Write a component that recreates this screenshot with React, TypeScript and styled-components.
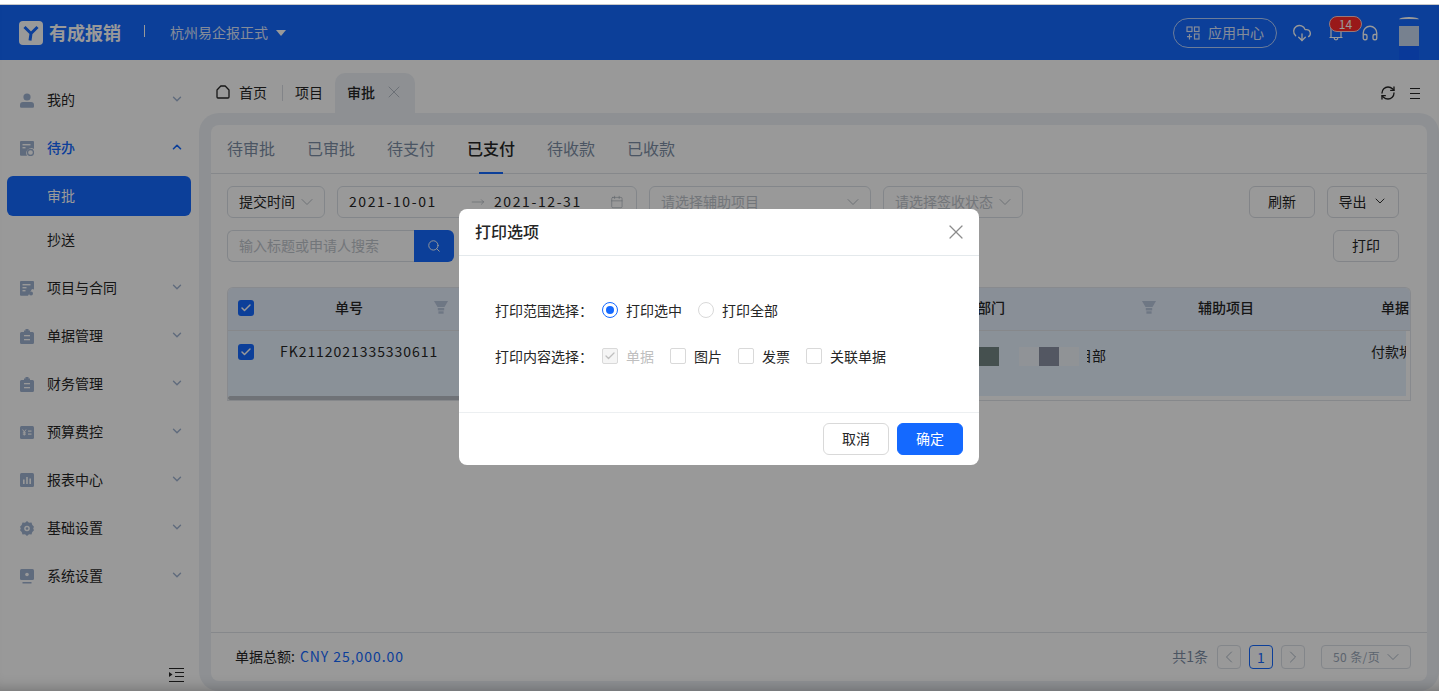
import { ChevronDown, ChevronLeft, ChevronRight, ChevronUp, CloudDownload, Headphones, RefreshCw, Search, X, Calendar, MoveRight, Check } from "lucide-react";
import styled, { createGlobalStyle } from "styled-components";

const GlobalStyle = createGlobalStyle`
  html, body {
    margin: 0;
    padding: 0;
    height: 100%;
    overflow: hidden;
    background: #fff;
    font-family: "Noto Sans CJK SC", "Noto Sans", sans-serif;
    font-size: 14px;
    color: #262626;
  }
  * {
    box-sizing: border-box;
  }
`;

const BLUE = "#1469ff";
const ICON = "#9fb2d0";

type IconName = "user" | "todo" | "project" | "clip" | "budget" | "chart" | "gear" | "screen";

function MenuIcon({ name }: { name: IconName }) {
  const fill = ICON;
  switch (name) {
    case "user":
      return (
        <svg width="14" height="15" viewBox="0 0 14 15">
          <circle cx="7" cy="4" r="3.6" fill={fill} />
          <path d="M0 12a3 3 0 0 1 3-3h8a3 3 0 0 1 3 3v1.5a1.2 1.2 0 0 1-1.2 1.2H1.2A1.2 1.2 0 0 1 0 13.5z" fill={fill} />
        </svg>
      );
    case "todo":
      return (
        <svg width="14" height="15" viewBox="0 0 14 15">
          <path d="M1 0h12a1 1 0 0 1 1 1v7a5 5 0 0 0-7 6.8H1a1 1 0 0 1-1-1V1a1 1 0 0 1 1-1z" fill={fill} />
          <rect x="2.5" y="3" width="8" height="1.4" fill="#fff" />
          <rect x="2.5" y="6" width="3" height="1.4" fill="#fff" />
          <circle cx="10.5" cy="11.5" r="3" fill="none" stroke={fill} strokeWidth="1.3" />
        </svg>
      );
    case "project":
      return (
        <svg width="14" height="15" viewBox="0 0 14 15">
          <path d="M1 0h12a1 1 0 0 1 1 1v7.5L12 8l-4 6.8H1a1 1 0 0 1-1-1V1a1 1 0 0 1 1-1z" fill={fill} />
          <rect x="2.5" y="3" width="8" height="1.4" fill="#fff" />
          <rect x="2.5" y="6" width="4" height="1.4" fill="#fff" />
          <rect x="2.5" y="9" width="3" height="1.4" fill="#fff" />
          <circle cx="11" cy="12.5" r="2" fill={fill} />
        </svg>
      );
    case "clip":
      return (
        <svg width="14" height="15" viewBox="0 0 14 15">
          <path d="M4 1.5h1.5V0h3v1.5H10V3h2.5A1.5 1.5 0 0 1 14 4.5v9a1.5 1.5 0 0 1-1.5 1.5h-11A1.5 1.5 0 0 1 0 13.5v-9A1.5 1.5 0 0 1 1.5 3H4z" fill={fill} />
          <rect x="4" y="6" width="6" height="1.3" fill="#fff" />
          <rect x="4" y="10" width="6" height="1.3" fill="#fff" />
        </svg>
      );
    case "budget":
      return (
        <svg width="14" height="13" viewBox="0 0 14 13">
          <rect width="14" height="13" rx="1.5" fill={fill} />
          <path d="M2.6 3.5l1.7 2.5 1.7-2.5M4.3 6v3.5M2.8 6.8h3M2.8 8.2h3" stroke="#fff" strokeWidth="1" fill="none" />
          <rect x="8" y="4.5" width="3.5" height="1.2" fill="#fff" />
          <rect x="8" y="7.5" width="3.5" height="1.2" fill="#fff" />
        </svg>
      );
    case "chart":
      return (
        <svg width="14" height="14" viewBox="0 0 14 14">
          <rect width="14" height="14" rx="1.5" fill={fill} />
          <rect x="3" y="6.5" width="1.6" height="4.5" fill="#fff" />
          <rect x="6.2" y="4" width="1.6" height="7" fill="#fff" />
          <rect x="9.4" y="5.5" width="1.6" height="5.5" fill="#fff" />
        </svg>
      );
    case "gear":
      return (
        <svg width="14" height="15" viewBox="0 0 14 15">
          <path d="M7 0l2 1.7 2.5-.2.8 2.4L14 5.7 13.2 7.5 14 9.3l-1.700 1.800-.8 2.400-2.500-.2L7 15l-2-1.700-2.500.2-.8-2.400L0 9.300.8 7.500 0 5.700l1.700-1.800.8-2.400 2.500.2z" fill={fill} />
          <circle cx="7" cy="7.5" r="2.8" fill="#fff" />
          <circle cx="7" cy="7.5" r="1.3" fill={fill} />
        </svg>
      );
    case "screen":
      return (
        <svg width="14" height="15" viewBox="0 0 14 15">
          <rect width="14" height="11" rx="1.5" fill={fill} />
          <circle cx="7" cy="5.5" r="1.8" fill="#fff" />
          <rect x="2.5" y="13" width="9" height="1.5" fill={fill} />
        </svg>
      );
  }
}

function FunnelIcon() {
  return (
    <svg width="14" height="13" viewBox="0 0 14 13">
      <path d="M0 0h14l-3.500 6h-7z" fill="#b8c6dc" />
      <rect x="3.8" y="7" width="6.4" height="2.4" fill="#b8c6dc" />
      <rect x="4.4" y="10.3" width="5.2" height="2.4" fill="#b8c6dc" />
    </svg>
  );
}

const menuItems: { label: string; icon: IconName }[] = [
  { label: "项目与合同", icon: "project" },
  { label: "单据管理", icon: "clip" },
  { label: "财务管理", icon: "clip" },
  { label: "预算费控", icon: "budget" },
  { label: "报表中心", icon: "chart" },
  { label: "基础设置", icon: "gear" },
  { label: "系统设置", icon: "screen" },
];

const mosaic = ["#748684", "#e6f2fd", "#f0f6fc", "#8a92a3", "#f0f5fb"];

export default function App() {
  return (
    <>
      <GlobalStyle />
      <Shell>
        <TopBar>
          <Brand>
            <Logo>
              <svg width="24" height="24" viewBox="0 0 24 24">
                <path d="M5.500 6 12 12.500 18.500 6M12 12.500 11 19.500" stroke={BLUE} strokeWidth="3" fill="none" />
              </svg>
            </Logo>
            <BrandName>有成报销</BrandName>
            <BrandDivider />
            <CompanyName>杭州易企报正式</CompanyName>
            <Caret />
          </Brand>
          <TopActions>
            <AppCenter>
              <svg width="14" height="14" viewBox="0 0 14 14" fill="none" stroke="currentColor" strokeWidth="1.2">
                <rect x="1" y="1" width="5" height="4.5" />
                <rect x="8.5" y="1" width="4.5" height="4.5" />
                <rect x="8.5" y="8" width="4.5" height="5" />
                <path d="M3.5 8v5.500M1 10.700h5" />
              </svg>
              <AppCenterLabel>应用中心</AppCenterLabel>
            </AppCenter>
            <CloudDownload size={20} strokeWidth={1.6} />
            <BellWrap>
              <svg width="14" height="14" viewBox="0 0 14 14" fill="none" stroke="currentColor" strokeWidth="1.2">
                <path d="M2 0v10.500M12 0v10.500M.5 10.500h13M5.200 11a1.800 1.800 0 0 0 3.600 0" />
              </svg>
              <Badge>14</Badge>
            </BellWrap>
            <HeadsetSlot>
              <Headphones size={18} strokeWidth={1.8} />
            </HeadsetSlot>
            <Avatar>
              <AvatarArc />
              <AvatarFace />
              <AvatarNeck />
            </Avatar>
          </TopActions>
        </TopBar>
        <Body>
          <Sidebar>
            <MenuRow>
              <MenuIcon name="user" />
              <MenuLabel>我的</MenuLabel>
              <ChevronDown size={14} strokeWidth={2.4} color={ICON} />
            </MenuRow>
            <MenuRow>
              <MenuIcon name="todo" />
              <MenuLabel $active>待办</MenuLabel>
              <ChevronUp size={14} strokeWidth={2.8} color={BLUE} />
            </MenuRow>
            <SubItem $active $first>
              审批
            </SubItem>
            <SubItem>抄送</SubItem>
            {menuItems.map((item) => (
              <MenuRow key={item.label}>
                <MenuIcon name={item.icon} />
                <MenuLabel>{item.label}</MenuLabel>
                <ChevronDown size={14} strokeWidth={2.4} color={ICON} />
              </MenuRow>
            ))}
            <CollapseButton>
              <svg width="15" height="14" viewBox="0 0 15 14" fill="none" stroke="#262626" strokeWidth="1">
                <path d="M0 .5h15M6 4.500h9M6 8.500h9M0 13.500h15" />
                <path d="M0 4l3.500 2.500L0 9z" fill="#262626" stroke="none" />
              </svg>
            </CollapseButton>
          </Sidebar>
          <Main>
            <PageTabs>
              <PageTab>
                <svg width="14" height="14" viewBox="0 0 14 14" fill="none" stroke="#262626" strokeWidth="1.3">
                  <path d="M1 5 4.800 1h4.400L13 5v7a1 1 0 0 1-1 1H2a1 1 0 0 1-1-1z" strokeLinejoin="round" />
                </svg>
                首页
              </PageTab>
              <TabDivider />
              <PageTab>项目</PageTab>
              <ActivePageTab>
                审批
                <X size={20} strokeWidth={1} color="#a8b0bb" />
              </ActivePageTab>
              <TabTools>
                <RefreshCw size={16} strokeWidth={2} />
                <svg width="10" height="11" viewBox="0 0 10 11" stroke="#262626" strokeWidth="1">
                  <path d="M0 .5h10M0 5.500h10M0 10.500h10" />
                </svg>
              </TabTools>
            </PageTabs>
            <Frame>
              <Card>
                <StatusTabs>
                  <StatusTab>待审批</StatusTab>
                  <StatusTab>已审批</StatusTab>
                  <StatusTab>待支付</StatusTab>
                  <StatusTab $active>已支付</StatusTab>
                  <StatusTab>待收款</StatusTab>
                  <StatusTab>已收款</StatusTab>
                </StatusTabs>
                <Toolbar>
                  <ToolRow>
                    <Select $width={98}>
                      <span>提交时间</span>
                      <ChevronDown size={20} strokeWidth={1} color="#a9b1ba" />
                    </Select>
                    <DateRange>
                      <DateText>2021-10-01</DateText>
                      <MoveRight size={14} strokeWidth={1} color="#9aa3ad" />
                      <DateText>2021-12-31</DateText>
                      <Calendar size={14} strokeWidth={1} color="#9aa3ad" />
                    </DateRange>
                    <Select $width={222} $placeholder>
                      <span>请选择辅助项目</span>
                      <ChevronDown size={20} strokeWidth={1} color="#a9b1ba" />
                    </Select>
                    <Select $width={140} $placeholder>
                      <span>请选择签收状态</span>
                      <ChevronDown size={20} strokeWidth={1} color="#a9b1ba" />
                    </Select>
                    <ToolSpacer />
                    <OutlineButton $width={66}>刷新</OutlineButton>
                    <OutlineButton $width={72}>
                      导出
                      <ChevronDown size={16} strokeWidth={1.4} />
                    </OutlineButton>
                  </ToolRow>
                  <ToolRow>
                    <SearchBox>
                      <SearchInput>输入标题或申请人搜索</SearchInput>
                      <SearchButton>
                        <Search size={14} strokeWidth={1.6} color="#fff" />
                      </SearchButton>
                    </SearchBox>
                    <ToolSpacer />
                    <OutlineButton $width={66}>打印</OutlineButton>
                  </ToolRow>
                </Toolbar>
                <Table>
                  <HeadRow>
                    <CheckCell>
                      <BlueCheck>
                        <Check size={12} strokeWidth={3} color="#fff" />
                      </BlueCheck>
                    </CheckCell>
                    <NumberHead>
                      单号
                      <FunnelSlot>
                        <FunnelIcon />
                      </FunnelSlot>
                    </NumberHead>
                    <MiddleCell />
                    <DeptHead>
                      部门
                      <FunnelSlot>
                        <FunnelIcon />
                      </FunnelSlot>
                    </DeptHead>
                    <AuxHead>辅助项目</AuxHead>
                    <TypeHead>单据</TypeHead>
                  </HeadRow>
                  <DataRow>
                    <RowCheckCell>
                      <BlueCheck>
                        <Check size={12} strokeWidth={3} color="#fff" />
                      </BlueCheck>
                    </RowCheckCell>
                    <NumberCell>FK2112021335330611</NumberCell>
                    <MiddleCell />
                    <DeptCell>
                      {mosaic.map((tone, i) => (
                        <MosaicTile key={i} $tone={tone} />
                      ))}
                      <DeptTail>目部</DeptTail>
                    </DeptCell>
                    <AuxCell />
                    <TypeCell>付款坍</TypeCell>
                  </DataRow>
                  <HScrollBar />
                </Table>
                <CardSpacer />
                <FooterBar>
                  <Total>
                    单据总额:
                    <TotalValue>CNY 25,000.00</TotalValue>
                  </Total>
                  <Pager>
                    <PagerTotal>共1条</PagerTotal>
                    <PageButton>
                      <ChevronLeft size={20} strokeWidth={1} />
                    </PageButton>
                    <PageButton $current>1</PageButton>
                    <PageButton>
                      <ChevronRight size={20} strokeWidth={1} />
                    </PageButton>
                    <PageSize>
                      <span>50 条/页</span>
                      <ChevronDown size={20} strokeWidth={1} />
                    </PageSize>
                  </Pager>
                </FooterBar>
              </Card>
            </Frame>
          </Main>
        </Body>
        <Mask>
          <Modal>
            <ModalHeader>
              <ModalTitle>打印选项</ModalTitle>
              <X size={24} strokeWidth={1.2} color="#8c8c8c" />
            </ModalHeader>
            <ModalBody>
              <FormRow>
                <FormLabel>打印范围选择：</FormLabel>
                <Radio $checked />
                <OptionText>打印选中</OptionText>
                <Radio />
                <OptionText>打印全部</OptionText>
              </FormRow>
              <FormRow>
                <FormLabel>打印内容选择：</FormLabel>
                <CheckOption $disabled>
                  <CheckBox $disabled>
                    <Check size={12} strokeWidth={2.6} color="#bfbfbf" />
                  </CheckBox>
                  单据
                </CheckOption>
                <CheckOption>
                  <CheckBox />
                  图片
                </CheckOption>
                <CheckOption>
                  <CheckBox />
                  发票
                </CheckOption>
                <CheckOption>
                  <CheckBox />
                  关联单据
                </CheckOption>
              </FormRow>
            </ModalBody>
            <ModalFooter>
              <ModalButton>取消</ModalButton>
              <ModalButton $primary>确定</ModalButton>
            </ModalFooter>
          </Modal>
        </Mask>
      </Shell>
    </>
  );
}

const Shell = styled.div`
  position: relative;
  margin-top: 4px;
  height: 687px;
  display: flex;
  flex-direction: column;
  border-top: 1px solid #c8c8c8;
  background: #fff;
  overflow: hidden;
`;

const TopBar = styled.header`
  height: 55px;
  flex-shrink: 0;
  background: ${BLUE};
  display: flex;
  align-items: center;
  justify-content: space-between;
  padding: 0 19px;
  color: #fff;
`;

const Brand = styled.div`
  display: flex;
  align-items: center;
`;

const Logo = styled.div`
  width: 24px;
  height: 24px;
  background: #fff;
  border-radius: 4px;
`;

const BrandName = styled.div`
  margin: 0 0 2px 6px;
  font-size: 18px;
  font-weight: 700;
`;

const BrandDivider = styled.div`
  width: 1px;
  height: 12px;
  background: #fff;
  margin: 0 25px 4px 23px;
`;

const CompanyName = styled.div`
  font-size: 14px;
  margin-bottom: 2px;
  opacity: 0.85;
`;

const Caret = styled.div`
  margin-left: 8px;
  border-left: 5px solid transparent;
  border-right: 5px solid transparent;
  border-top: 6px solid #fff;
`;

const TopActions = styled.div`
  display: flex;
  align-items: center;
`;

const AppCenter = styled.div`
  width: 104px;
  height: 30px;
  border: 1px solid rgba(255, 255, 255, 0.8);
  border-radius: 15px;
  display: flex;
  align-items: center;
  justify-content: center;
  gap: 8px;
  margin-right: 15px;
  opacity: 0.85;
`;

const AppCenterLabel = styled.span`
  margin-bottom: 2px;
`;

const BellWrap = styled.div`
  position: relative;
  margin: 3px 0 0 17px;
  width: 14px;
  height: 14px;
  display: flex;
`;

const Badge = styled.div`
  position: absolute;
  left: 0;
  top: -11px;
  width: 33px;
  height: 16px;
  border-radius: 8px;
  background: #ff2a2a;
  border: 1px solid #ffc9c9;
  font-size: 12px;
  line-height: 13px;
  text-align: center;
`;

const HeadsetSlot = styled.div`
  position: relative;
  margin-left: 18px;
  display: flex;
`;

const Avatar = styled.div`
  margin-left: 19px;
  width: 22px;
  height: 55px;
  display: flex;
  flex-direction: column;
  align-items: center;
  padding-top: 12px;
`;

const AvatarArc = styled.div`
  width: 20px;
  height: 5px;
  border-top: 2px solid #fff;
  border-radius: 50% 50% 0 0;
  margin-bottom: 4px;
`;

const AvatarFace = styled.div`
  width: 20px;
  height: 20px;
  background: #c7d7ee;
`;

const AvatarNeck = styled.div`
  width: 20px;
  flex: 1;
  background: #0f5fff;
`;

const Body = styled.div`
  flex: 1;
  min-height: 0;
  display: flex;
`;

const Sidebar = styled.aside`
  position: relative;
  width: 199px;
  flex-shrink: 0;
  padding: 16px 8px 0 8px;
`;

const MenuRow = styled.div`
  height: 48px;
  display: flex;
  align-items: center;
  padding: 0 7px 0 12px;
  & > svg:first-child {
    width: 14px;
    flex-shrink: 0;
  }
  & > svg:last-child {
    margin-bottom: 2px;
  }
`;

const MenuLabel = styled.div<{ $active?: boolean }>`
  flex: 1;
  margin: 0 0 2px 13px;
  font-weight: ${(p) => (p.$active ? 500 : 400)};
  color: ${(p) => (p.$active ? BLUE : "#262626")};
`;

const SubItem = styled.div<{ $active?: boolean; $first?: boolean }>`
  height: 40px;
  margin: ${(p) => (p.$first ? "4px" : "0")} 0 4px -1px;
  border-radius: 6px;
  display: flex;
  align-items: center;
  padding: 0 0 2px 40px;
  background: ${(p) => (p.$active ? BLUE : "transparent")};
  color: ${(p) => (p.$active ? "#fff" : "#262626")};
`;

const CollapseButton = styled.div`
  position: absolute;
  left: 169px;
  bottom: 9px;
  display: flex;
`;

const Main = styled.main`
  flex: 1;
  min-width: 0;
  display: flex;
  flex-direction: column;
`;

const PageTabs = styled.div`
  height: 53px;
  flex-shrink: 0;
  display: flex;
  align-items: flex-end;
  padding-left: 17px;
`;

const PageTab = styled.div`
  height: 40px;
  display: flex;
  align-items: center;
  gap: 9px;
  padding-bottom: 3px;
`;

const TabDivider = styled.div`
  width: 1px;
  height: 16px;
  background: #d9dde3;
  margin: 0 12px 12px 15px;
`;

const ActivePageTab = styled(PageTab)`
  width: 80px;
  margin-left: 12px;
  padding-left: 12px;
  gap: 9px;
  background: #edf1f6;
  border-radius: 10px 10px 0 0;
  font-weight: 500;
`;

const TabTools = styled.div`
  margin-left: auto;
  height: 40px;
  display: flex;
  align-items: center;
  gap: 14px;
  padding: 0 19px 0 0;
`;

const Frame = styled.div`
  flex: 1;
  min-height: 0;
  background: #edf1f6;
  border-radius: 20px;
  padding: 12px 12px 10px;
`;

const Card = styled.div`
  height: 100%;
  background: #fff;
  border-radius: 8px;
  display: flex;
  flex-direction: column;
  overflow: hidden;
`;

const StatusTabs = styled.div`
  height: 49px;
  flex-shrink: 0;
  display: flex;
  gap: 32px;
  padding-left: 16px;
  border-bottom: 1px solid #dfe3e8;
`;

const StatusTab = styled.div<{ $active?: boolean }>`
  position: relative;
  font-size: 16px;
  line-height: 46px;
  height: 48px;
  font-weight: ${(p) => (p.$active ? 500 : 400)};
  color: ${(p) => (p.$active ? "#262626" : "#7d8ea6")};
  ${(p) =>
    p.$active &&
    `
    &::after {
      content: "";
      position: absolute;
      left: 12px;
      right: 12px;
      bottom: -1px;
      height: 2px;
      background: ${BLUE};
    }
  `}
`;

const Toolbar = styled.div`
  padding: 12px 28px 0 16px;
  display: flex;
  flex-direction: column;
  gap: 12px;
`;

const ToolRow = styled.div`
  display: flex;
  height: 32px;
  gap: 12px;
`;

const ToolSpacer = styled.div`
  flex: 1;
`;

const Select = styled.div<{ $width: number; $placeholder?: boolean }>`
  width: ${(p) => p.$width}px;
  height: 32px;
  border: 1px solid #dbe0e6;
  border-radius: 6px;
  display: flex;
  align-items: center;
  justify-content: space-between;
  padding: 0 7px 0 11px;
  color: ${(p) => (p.$placeholder ? "#bfc5cc" : "#262626")};
  & > span {
    margin-bottom: 2px;
  }
`;

const DateRange = styled.div`
  width: 300px;
  height: 32px;
  border: 1px solid #dbe0e6;
  border-radius: 6px;
  display: flex;
  align-items: center;
  padding: 0 12px 0 11px;
`;

const DateText = styled.div`
  margin-bottom: 2px;
  letter-spacing: 1.6px;
  width: 124px;
  &:nth-of-type(2) {
    width: 118px;
    margin-left: 9px;
  }
`;

const OutlineButton = styled.div<{ $width: number }>`
  width: ${(p) => p.$width}px;
  height: 32px;
  border: 1px solid #d9dde3;
  border-radius: 6px;
  display: flex;
  align-items: center;
  justify-content: center;
  gap: 5px;
  padding-bottom: 2px;
`;

const SearchBox = styled.div`
  width: 227px;
  height: 32px;
  display: flex;
`;

const SearchInput = styled.div`
  flex: 1;
  border: 1px solid #dbe0e6;
  border-right: 0;
  border-radius: 6px 0 0 6px;
  padding-left: 11px;
  line-height: 28px;
  color: #bfc5cc;
`;

const SearchButton = styled.div`
  width: 40px;
  background: ${BLUE};
  border-radius: 0 6px 6px 0;
  display: flex;
  align-items: center;
  justify-content: center;
`;

const Table = styled.div`
  margin: 25px 16px 0;
  width: 1184px;
  height: 114px;
  border: 1px solid #e3e7ed;
  border-bottom-color: #dfe3e8;
  border-radius: 6px 6px 0 0;
  overflow: hidden;
  flex-shrink: 0;
`;

const HeadRow = styled.div`
  height: 43px;
  display: flex;
  align-items: center;
  padding-bottom: 2px;
  background: #e5eefc;
  border-bottom: 1px solid #dfe3e8;
  font-weight: 500;
  white-space: nowrap;
`;

const DataRow = styled.div`
  height: 65px;
  width: 1178px;
  display: flex;
  align-items: flex-start;
  background: #e6f2fd;
`;

const CheckCell = styled.div`
  width: 40px;
  flex-shrink: 0;
  display: flex;
  padding-left: 10px;
`;

const RowCheckCell = styled(CheckCell)`
  padding-top: 13px;
`;

const BlueCheck = styled.span`
  width: 16px;
  height: 16px;
  border-radius: 3px;
  background: ${BLUE};
  display: flex;
  align-items: center;
  justify-content: center;
`;

const NumberHead = styled.div`
  position: relative;
  width: 192px;
  flex-shrink: 0;
  text-align: center;
  padding-right: 30px;
  margin-bottom: 2px;
`;

const FunnelSlot = styled.span`
  position: absolute;
  right: 12px;
  top: 4px;
  display: flex;
`;

const NumberCell = styled.div`
  width: 192px;
  flex-shrink: 0;
  padding-left: 12px;
  line-height: 40px;
  letter-spacing: 0.95px;
`;

const MiddleCell = styled.div`
  width: 516px;
  flex-shrink: 0;
`;

const DeptHead = styled.div`
  position: relative;
  width: 200px;
  flex-shrink: 0;
  padding-left: 1px;
  margin-bottom: 2px;
  & > ${FunnelSlot} {
    right: 20px;
  }
`;

const AuxHead = styled.div`
  width: 183px;
  flex-shrink: 0;
  padding-left: 22px;
  margin-bottom: 2px;
`;

const TypeHead = styled.div`
  flex: 1;
  padding-left: 22px;
  margin-bottom: 2px;
`;

const DeptCell = styled.div`
  width: 200px;
  flex-shrink: 0;
  display: flex;
  align-items: center;
  height: 20px;
  margin-top: 15px;
  padding-left: 3px;
`;

const MosaicTile = styled.span<{ $tone: string }>`
  width: 20px;
  height: 19px;
  background: ${(p) => p.$tone};
`;

const DeptTail = styled.span`
  width: 19px;
  margin: 0 0 3px 8px;
  overflow: hidden;
  white-space: nowrap;
  direction: rtl;
`;

const AuxCell = styled.div`
  width: 183px;
  flex-shrink: 0;
`;

const TypeCell = styled.div`
  flex: 1;
  min-width: 0;
  white-space: nowrap;
  overflow: hidden;
  line-height: 40px;
  padding-left: 12px;
`;

const HScrollBar = styled.div`
  height: 4px;
  width: 600px;
  background: #b9bec6;
  border-radius: 2px;
`;

const CardSpacer = styled.div`
  flex: 1;
`;

const FooterBar = styled.div`
  height: 49px;
  flex-shrink: 0;
  border-top: 1px solid #dfe3e8;
  display: flex;
  align-items: center;
  justify-content: space-between;
  padding: 0 16px 0 24px;
`;

const Total = styled.div`
  display: flex;
  gap: 5px;
  margin-bottom: 2px;
`;

const TotalValue = styled.span`
  color: ${BLUE};
  letter-spacing: 0.95px;
`;

const Pager = styled.div`
  display: flex;
  align-items: center;
  color: #7d8ea6;
`;

const PagerTotal = styled.span`
  margin: 0 9px 2px 0;
`;

const PageButton = styled.div<{ $current?: boolean }>`
  width: 24px;
  height: 24px;
  margin-right: 8px;
  border: 1px solid ${(p) => (p.$current ? BLUE : "#dbe0e6")};
  border-radius: 4px;
  display: flex;
  align-items: center;
  justify-content: center;
  color: ${(p) => (p.$current ? BLUE : "#9aa7b8")};
`;

const PageSize = styled.div`
  width: 90px;
  height: 24px;
  margin-left: 8px;
  border: 1px solid #dbe0e6;
  border-radius: 4px;
  display: flex;
  align-items: center;
  justify-content: space-between;
  padding: 0 7px 0 11px;
  font-size: 12px;
  letter-spacing: 0.4px;
  color: #9aa7b8;
  & > span {
    margin-bottom: 1px;
    white-space: pre;
  }
`;

const Mask = styled.div`
  position: absolute;
  inset: 0;
  background: rgba(0, 0, 0, 0.4);
  box-shadow: inset 0 -14px 14px -12px rgba(0, 0, 0, 0.25);
  display: flex;
  justify-content: center;
  align-items: flex-start;
  padding: 204px 1px 0 0;
`;

const Modal = styled.div`
  width: 520px;
  height: 256px;
  background: #fff;
  border-radius: 8px;
  display: flex;
  flex-direction: column;
`;

const ModalHeader = styled.div`
  height: 47px;
  flex-shrink: 0;
  border-bottom: 1px solid #e4e9ec;
  display: flex;
  align-items: center;
  justify-content: space-between;
  padding: 0 11px 0 16px;
`;

const ModalTitle = styled.div`
  font-size: 16px;
  font-weight: 500;
  margin-bottom: 2px;
`;

const ModalBody = styled.div`
  flex: 1;
  padding: 43px 0 0 36px;
  display: flex;
  flex-direction: column;
  gap: 24px;
`;

const FormRow = styled.div`
  height: 22px;
  display: flex;
  align-items: center;
`;

const FormLabel = styled.div`
  width: 107px;
  flex-shrink: 0;
  white-space: nowrap;
`;

const Radio = styled.span<{ $checked?: boolean }>`
  width: 16px;
  height: 16px;
  border-radius: 50%;
  border: 1px solid ${(p) => (p.$checked ? BLUE : "#d9d9d9")};
  display: flex;
  align-items: center;
  justify-content: center;
  &::after {
    content: "";
    width: 8px;
    height: 8px;
    border-radius: 50%;
    background: ${(p) => (p.$checked ? BLUE : "transparent")};
  }
`;

const OptionText = styled.span`
  margin: 0 16px 0 8px;
`;

const CheckOption = styled.label<{ $disabled?: boolean }>`
  display: flex;
  align-items: center;
  gap: 8px;
  margin-right: 16px;
  color: ${(p) => (p.$disabled ? "#bfbfbf" : "#262626")};
`;

const CheckBox = styled.span<{ $disabled?: boolean }>`
  width: 16px;
  height: 16px;
  border: 1px solid #d9d9d9;
  border-radius: 2px;
  background: ${(p) => (p.$disabled ? "#f5f5f5" : "#fff")};
  display: flex;
  align-items: center;
  justify-content: center;
`;

const ModalFooter = styled.div`
  height: 53px;
  flex-shrink: 0;
  border-top: 1px solid #eceff1;
  display: flex;
  align-items: center;
  justify-content: flex-end;
  gap: 8px;
  padding: 0 16px;
`;

const ModalButton = styled.div<{ $primary?: boolean }>`
  width: 66px;
  height: 32px;
  border-radius: 6px;
  border: 1px solid ${(p) => (p.$primary ? BLUE : "#d9d9d9")};
  background: ${(p) => (p.$primary ? BLUE : "#fff")};
  color: ${(p) => (p.$primary ? "#fff" : "#262626")};
  display: flex;
  align-items: center;
  justify-content: center;
  padding-bottom: 2px;
`;
